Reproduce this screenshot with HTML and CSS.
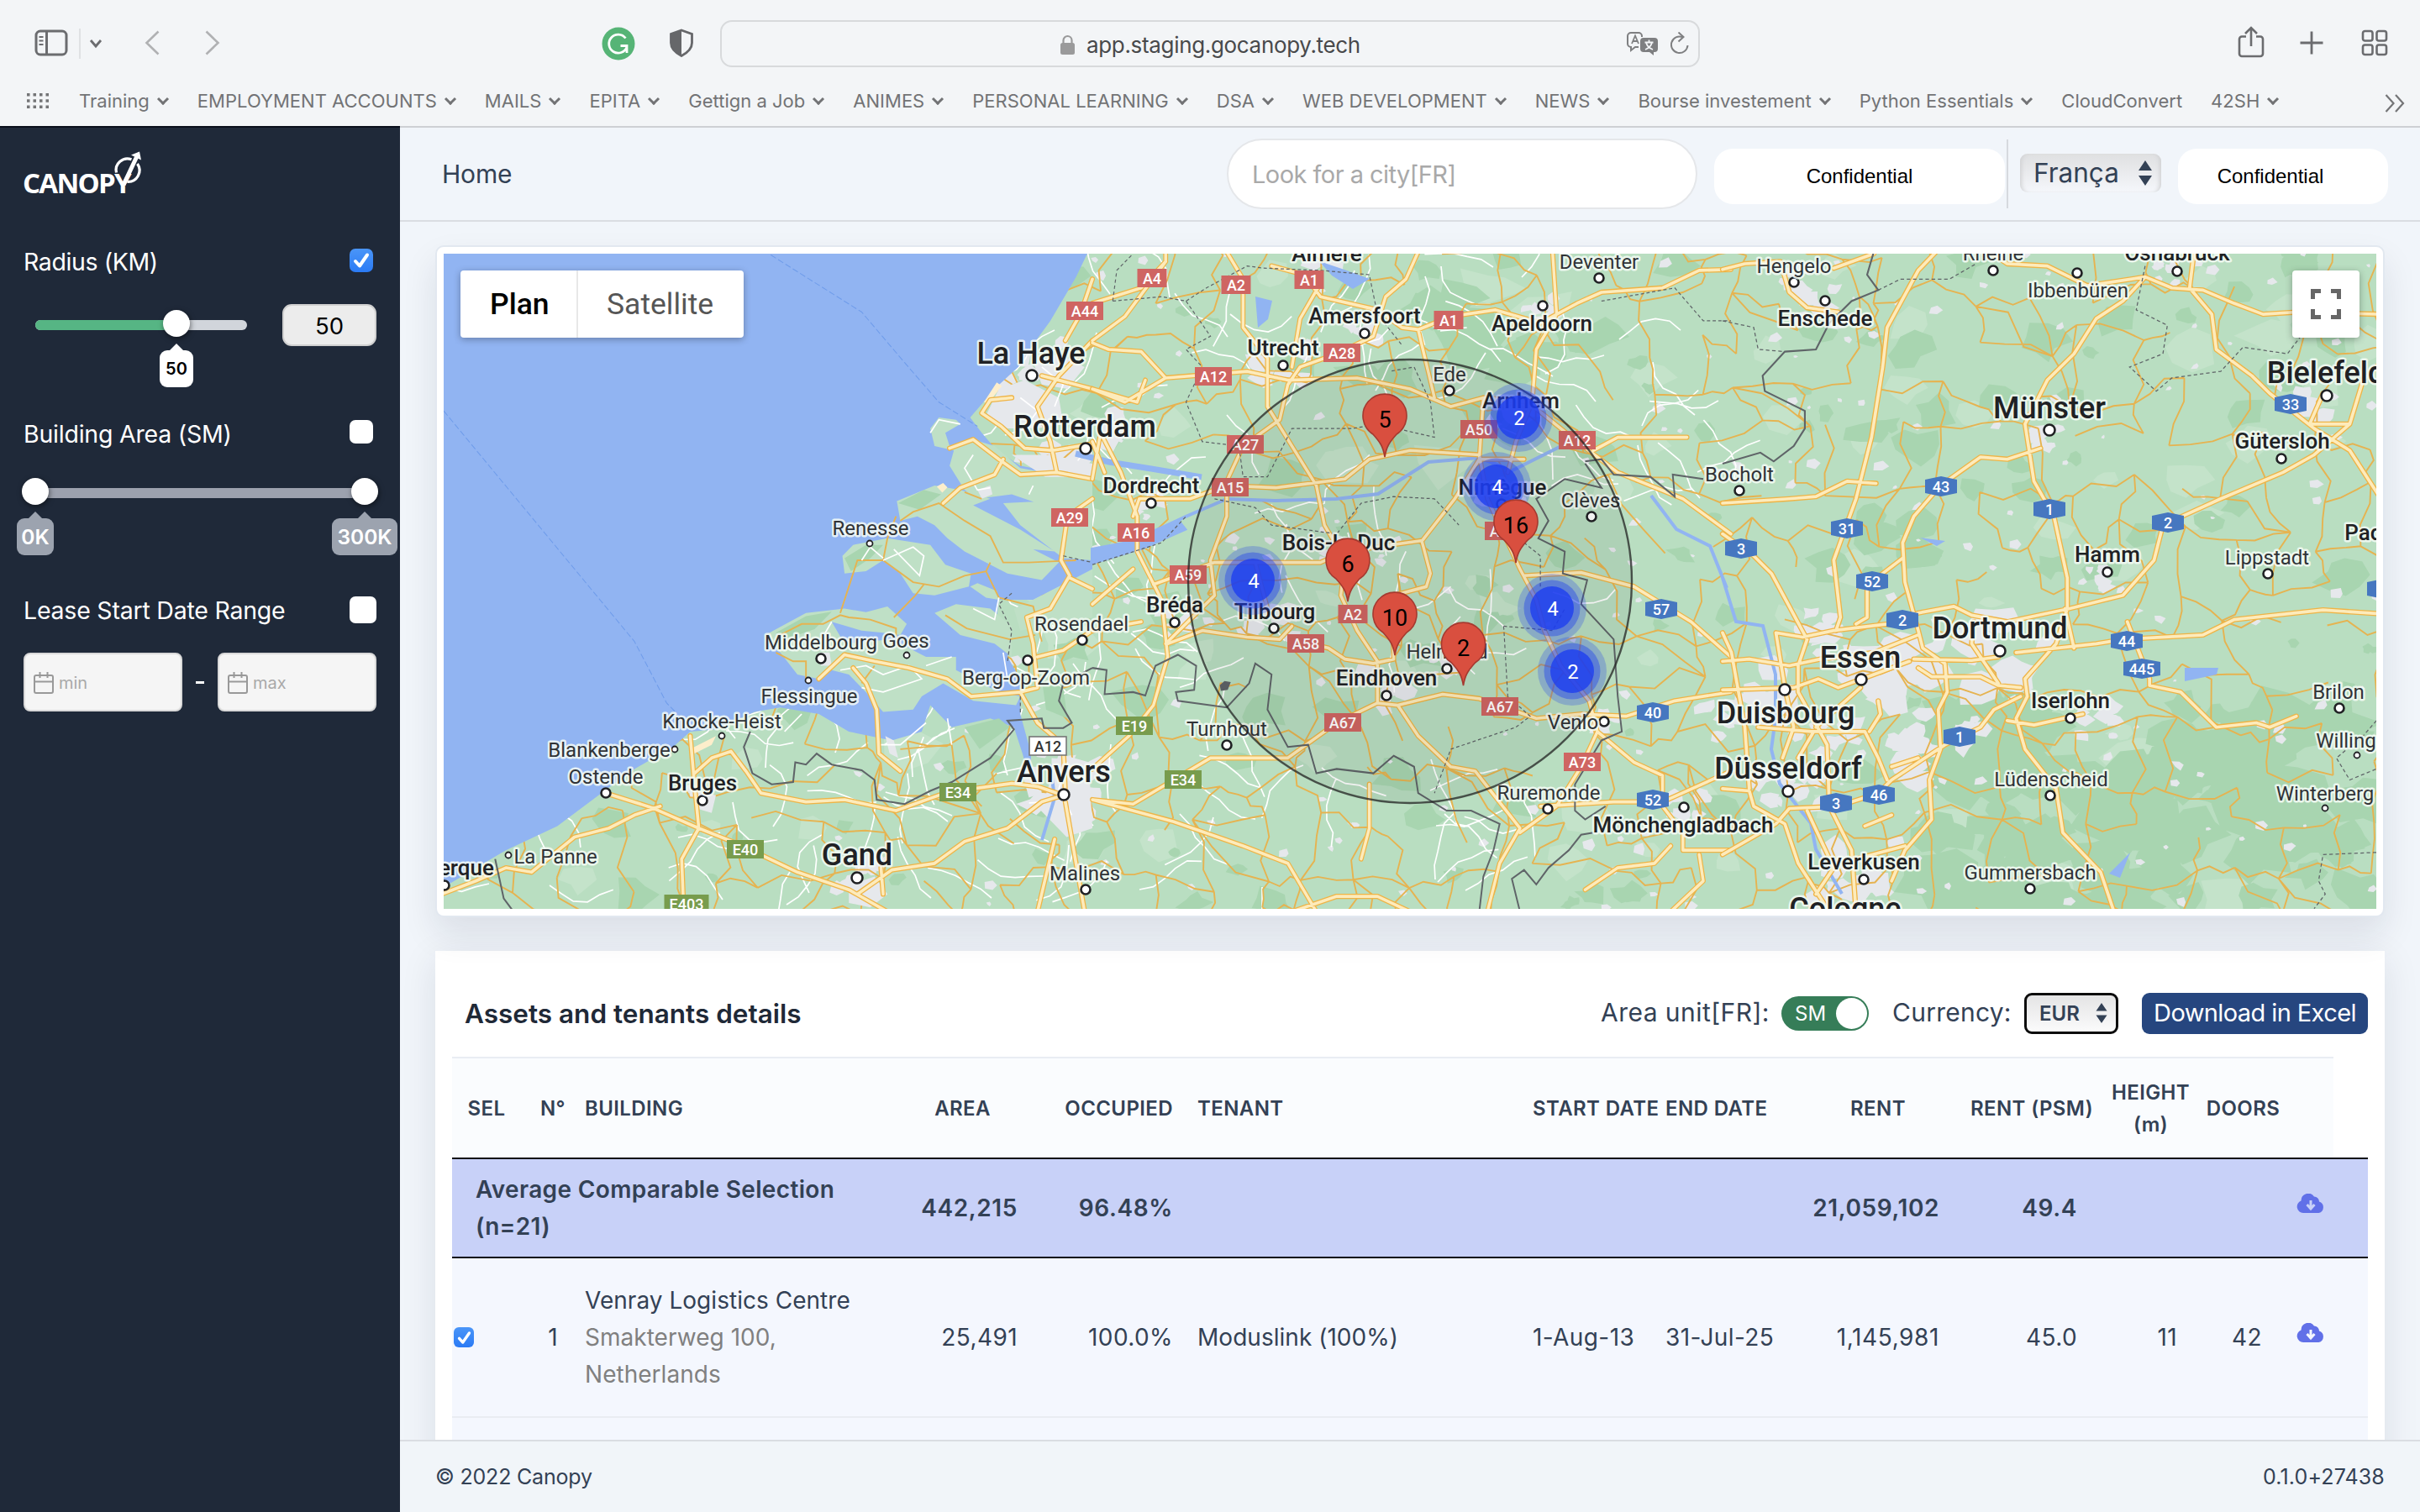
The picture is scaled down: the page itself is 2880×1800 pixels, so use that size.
FILE: index.html
```html
<!DOCTYPE html>
<html lang="en">
<head>
<meta charset="utf-8">
<title>Canopy</title>
<link rel="stylesheet" href="styles.css">
</head>
<body>
<div class="browser">
  <div class="toolbar">
    <svg class="ic-side" width="40" height="32" viewBox="0 0 40 32" fill="none" stroke="#6b6c6f" stroke-width="3"><rect x="2" y="2" width="36" height="28" rx="5"/><path d="M14.500 2V30"/><path stroke-width="2" d="M5.500 9h5M5.500 13.500h5M5.500 18h5"/></svg>
    <span class="tb-div"></span>
    <svg class="ic-drop" width="16" height="12" viewBox="0 0 16 12" fill="none" stroke="#6b6c6f" stroke-width="2.800"><path d="M2 2l6 7 6-7"/></svg>
    <svg class="ic-back" width="18" height="30" viewBox="0 0 18 30" fill="none" stroke="#b0b1b3" stroke-width="2.600"><path d="M16.500 1.500L2.500 15l14 13.500"/></svg>
    <svg class="ic-fwd" width="18" height="30" viewBox="0 0 18 30" fill="none" stroke="#b0b1b3" stroke-width="2.600"><path d="M1.500 1.500L15.500 15l-14 13.500"/></svg>
    <svg class="ic-g" width="40" height="40" viewBox="0 0 40 40" fill="none"><circle cx="20" cy="20" r="19.500" fill="#56b476"/><path d="M28.500 13.500A11 11 0 1 0 30 24v-1.500h-7.500M30 22.500V31" stroke="#fff" stroke-width="2.800"/></svg>
    <svg class="ic-shield" width="30" height="34" viewBox="0 0 30 34"><path d="M15 2L27.500 6.500V17c0 7-5 11.500-12.500 15.500C7.500 28.500 2.500 24 2.500 17V6.500z" fill="none" stroke="#66676a" stroke-width="2.800"/><path d="M15 2L2.500 6.500V17c0 7 5 11.500 12.500 15.500z" fill="#66676a"/></svg>
    <div class="url">
      <svg class="ic-lock" width="17" height="24" viewBox="0 0 17 24"><rect x="0" y="10" width="17" height="14" rx="2.500" fill="#9a9a9b"/><path d="M3.500 11V7a5 5 0 0 1 10 0v4" fill="none" stroke="#9a9a9b" stroke-width="2.200"/></svg>
      <span class="url-text">app.staging.gocanopy.tech</span>
      <svg class="ic-tr" width="38" height="28" viewBox="0 0 38 28"><path d="M18 6V5a4 4 0 0 0-4-4H5a4 4 0 0 0-4 4v9a4 4 0 0 0 4 4v4l5-4h4" fill="none" stroke="#7e7f81" stroke-width="2"/><path d="M6 14l4-9.500L14 14M7.500 11h5" fill="none" stroke="#7e7f81" stroke-width="1.800"/><path d="M20 7h13a4 4 0 0 1 4 4v9a4 4 0 0 1-4 4h-1v4l-5-4h-7a4 4 0 0 1-4-4v-9a4 4 0 0 1 4-4z" fill="#7e7f81"/><path d="M21.500 12.500h10M26.500 9.500v3M30 12.500c-1 4-4 7-8 8.500M23 12.500c1 4 4 7 8 8.500" stroke="#f3f5f7" stroke-width="1.800" fill="none"/></svg>
      <svg class="ic-re" width="22" height="27" viewBox="0 0 22 27" fill="none" stroke="#7e7f81" stroke-width="2"><path d="M20.500 16A9.800 9.800 0 1 1 14.500 6.200"/><path d="M9.500 .5L15.500 6l-6 5.500"/></svg>
    </div>
    <svg class="ic-share" width="32" height="38" viewBox="0 0 32 38" fill="none" stroke="#6b6c6f" stroke-width="2.600"><path d="M10 12.500H5a3 3 0 0 0-3 3V33a3 3 0 0 0 3 3h22a3 3 0 0 0 3-3V15.500a3 3 0 0 0-3-3h-5"/><path d="M16 24V3M9 9l7-7 7 7"/></svg>
    <svg class="ic-plus" width="28" height="28" viewBox="0 0 28 28" stroke="#6b6c6f" stroke-width="2.800"><path d="M14 0.500v27M0.500 14h27"/></svg>
    <svg class="ic-grid" width="32" height="32" viewBox="0 0 32 32" fill="none" stroke="#6b6c6f" stroke-width="2.600"><rect x="2" y="2" width="11.500" height="11.500" rx="2.500"/><rect x="18.500" y="2" width="11.500" height="11.500" rx="2.500"/><rect x="2" y="18.500" width="11.500" height="11.500" rx="2.500"/><rect x="18.500" y="18.500" width="11.500" height="11.500" rx="2.500"/></svg>
  </div>
  <div class="bookmarks">
    <svg class="ic-dots" width="26" height="18" viewBox="0 0 26 18" fill="#747577"><path d="M0 0h3.500v3.500H0zM7.500 0H11v3.500H7.500zM15 0h3.500v3.500H15zM22.500 0H26v3.500h-3.500zM0 7.200h3.500v3.500H0zM7.500 7.200H11v3.500H7.500zM15 7.200h3.500v3.500H15zM22.500 7.200H26v3.500h-3.500zM0 14.400h3.500v3.500H0zM7.500 14.400H11v3.500H7.500zM15 14.400h3.500v3.500H15zM22.500 14.400H26v3.500h-3.500z"/></svg>
    <span class="bm dd">Training</span><span class="bm dd">EMPLOYMENT ACCOUNTS</span><span class="bm dd">MAILS</span><span class="bm dd">EPITA</span><span class="bm dd">Gettign a Job</span><span class="bm dd">ANIMES</span><span class="bm dd">PERSONAL LEARNING</span><span class="bm dd">DSA</span><span class="bm dd">WEB DEVELOPMENT</span><span class="bm dd">NEWS</span><span class="bm dd">Bourse investement</span><span class="bm dd">Python Essentials</span><span class="bm">CloudConvert</span><span class="bm dd">42SH</span>
    <svg class="ic-more" width="24" height="22" viewBox="0 0 24 22" fill="none" stroke="#747577" stroke-width="2.200"><path d="M1.500 1l9 10-9 10M13 1l9 10-9 10"/></svg>
  </div>
</div>
<div class="app">
  <aside class="sidebar">
    <div class="logo"><span class="logo-text">CANOPY</span>
      <svg class="logo-leaf" width="38" height="52" viewBox="0 0 38 52" fill="none" stroke="#fff"><path d="M4.500 25.500A13.500 13.500 0 0 1 22.500 9.800" stroke-width="3.200"/><path d="M29.500 15A13.500 13.500 0 0 1 17.500 36.300" stroke-width="3.200"/><path d="M13 40L29 6" stroke-width="5"/><path d="M22 4.500L32 0.500 34 10.500z" fill="#fff" stroke="none"/></svg>
    </div>
    <div class="f-head radius-head"><span class="f-label">Radius (KM)</span><span class="cb on"><svg width="20" height="20" viewBox="0 0 20 20" fill="none" stroke="#fff" stroke-width="4" stroke-linecap="round" stroke-linejoin="round"><path d="M3 11l5 5.500L17 3.500"/></svg></span></div>
    <div class="radius-row">
      <div class="track track-a"><span class="fill"></span><span class="thumb ta"></span><span class="tip tip-w">50</span></div>
      <div class="num">50</div>
    </div>
    <div class="f-head area-head"><span class="f-label">Building Area (SM)</span><span class="cb"></span></div>
    <div class="track track-b"><span class="thumb tl"></span><span class="thumb tr"></span><span class="tip tip-l">0K</span><span class="tip tip-r">300K</span></div>
    <div class="f-head lease-head"><span class="f-label">Lease Start Date Range</span><span class="cb cb-lg"></span></div>
    <div class="dates">
      <div class="date"><svg width="24" height="26" viewBox="0 0 24 26" fill="none" stroke="#999" stroke-width="2"><rect x="1" y="4" width="22" height="21" rx="2"/><path d="M1 11.500h22M7.500 0v7M16.500 0v7"/></svg>min</div>
      <span class="dash"></span>
      <div class="date"><svg width="24" height="26" viewBox="0 0 24 26" fill="none" stroke="#999" stroke-width="2"><rect x="1" y="4" width="22" height="21" rx="2"/><path d="M1 11.500h22M7.500 0v7M16.500 0v7"/></svg>max</div>
    </div>
  </aside>
  <div class="main">
    <header class="header">
      <span class="home">Home</span>
      <div class="search"><span>Look for a city[FR]</span></div>
      <div class="conf conf-a">Confidential</div>
      <span class="hdiv"></span>
      <div class="country"><span>França</span><svg width="16" height="30" viewBox="0 0 16 30" fill="#334155"><path d="M8 0l8 12H0zM8 30L0 18h16z"/></svg></div>
      <div class="conf conf-b">Confidential</div>
    </header>
    <div class="content">
      <section class="map-card">
        <svg class="map" width="2300" height="780" viewBox="528 302 2300 780">
          <rect x="528" y="302" width="2300" height="780" fill="#b9dec1"/>
          <g id="terrain"></g>
          <g transform="translate(500 280) scale(.5102 .52296)">
            <path class="sea" d="M50 38H1558L1530 95 1470 195 1440 235 1395 300 1345 345 1283 415 1310 450 1345 490 1400 525 1568 555V800L1500 795 1430 830 1350 830 1345 870 1380 920 1370 960 1400 1010 1400 1090 1425 1180 1425 1250 1405 1180 1385 1120 1330 1100 1240 1120 1190 1070 1170 1130 1100 1150 1000 1130 930 1090 840 1075 780 1085 690 1125 630 1130 590 1165 500 1215 430 1265 320 1345 200 1400 50 1487Z"/>
            <path class="isle" d="M1190 440L1210 415 1250 420 1260 430 1225 450 1235 480 1290 465 1340 480 1400 530 1568 560V600L1440 610 1380 590 1300 600 1270 580 1235 525 1245 490 1200 480ZM1112 605L1200 570 1260 580 1330 600 1290 615 1400 670 1480 720 1430 715 1490 745 1450 785 1370 770 1270 720 1230 690 1200 660 1160 640 1120 650ZM1360 610L1568 600V740L1500 735 1400 660ZM985 730L1010 705 1090 690 1190 705 1225 750 1285 770 1280 800 1200 820 1150 815 1120 770 1080 740 1040 765 990 770ZM1283 800L1300 792 1345 810 1350 830 1320 825ZM1200 860L1250 840 1330 850 1380 890 1380 960 1340 930 1260 910ZM1430 830L1500 795 1568 760V870L1400 900 1385 850ZM805 910L900 860 990 850 1040 858 1090 845 1135 885 1120 910 1080 905 1030 900 960 880 990 930 1100 920 1180 960 1250 960 1250 990 1350 1040 1400 1050 1390 1070 1290 1060 1220 1020 1170 1050 1150 1080 1080 1085 1040 1040 1000 1000 960 990 930 1010 880 1000 840 950Z"/>
            <path class="forest" d="M990 735l50-30 40 0-30 30-45 30zM830 905l70-38 60-10-40 40-60 20zM1115 610l60-30 40 10-50 35zM1270 1120l80-20 25 20-70 50zM1450 1010l50 20 10 70-50-20z"/>
            <path class="sand" d="M1205 572l15-8 10 10-12 12zM1345 335l-30 45 10 3 32-40zM640 1180l-10-10 60-30-10 20z"/>
            <path class="ur" d="M1350 350l60-20 80 40 10 60-60 10-70 0-50-30zM1430 290l60-20 60 30-40 50-60-10zM1380 500l90 0 98 20v30l-110 0zM1300 580l30-10 5 20-25 10zM930 950l25 0 5 30-25 0zM640 1265l50 10-10 40-35-10zM1490 1180l70 20 8 150-60 20-60-60zM1000 1480l60-20 30 40-40 30-50-10zM1400 1210l40 0 10 60-30 10zM1085 1140l20 10 10 40-20-10z"/>
            <path class="road" d="M1120 650l30-20 60-20 60 40 60 35 30 60 60 0 110-5M980 860l20-60 20-60 60 0 10-50 20-50M1080 740l70 50 60 10 60-25 50-10 10-20M1105 870l50-50 20-25M830 915l60-30 50 0 40-20 20 5 50 5 60 20 0 20M830 950l40 20 30 0 0 40M1225 865l50 30 100 25 60-10M1060 980l-30 40M1420 960l0 80M1120 1170l120-10 10 80 60 60M1310 600l-40-15M1320 765l30 60 80 20 20 80M1345 1225l-60 60 40 60 60 40"/>
            <path class="minor" d="M1190 450l20-30 50 10M1290 500l-20 30 30 50 30-5M1030 740l20-30 30 25M1080 740l70-30 25 20-10 45-60-60M960 880l-30 50M980 990l60-10 40 20 60-20 30 30-90 30-50-10M1290 850l50 25 10-50M1180 980l60-20M1180 1110l-60 50-50 0M1230 1100l10 60M1430 570l-10 20M850 1130l40-40M1360 950l10 60M1400 370l40 30-30 40M1450 300l50 40-20 50M1510 1200l-20 60 30 60"/>
            <path class="ferry" d="M55 400L500 925 575 1065 595 1085M818 45L1030 175 1130 290 1210 380 1300 435"/>
          </g>
          <g class="water-lines">
            <path d="M1300 662L1358 640 1411 615 1460 594 1518 596 1590 594 1640 588 1700 550 1760 545 1800 560 1860 530"/>
            <path d="M1280 540l40 10 50 8 60 10" stroke-width="7"/>
            <path d="M1300 670l60-18 50-22-8-10-60 26-42 8z" fill="#91b4f2"/>
            <path d="M2050 688l16 52 32 5 15 58 0 52-5 37 10 41 37 47 6 31 31 53M1965 590l30 40 40 20 20 50M1240 1000l15-50-5-40"/>
            <path d="M1570 311l30 10 30 11-20 12-25-16zM1494 353l20 5-5 22-12 10zM2600 795l40 0-2 8-38 8zM2510 1040l25-25-12 30zM2285 640l30 4-10 6z" fill="#91b4f2" stroke="none"/>
          </g>
          <g class="cased" id="highways">
            <g transform="translate(500 280) scale(.5102 .52296)"><path id="h5" d="M50 1500L130 1470 200 1440 260 1450 360 1370 440 1350 500 1320 560 1300M433 1270L540 1303 650 1350 740 1385 880 1450 1000 1490 1090 1540M630 1140L640 1250 650 1350 610 1420 615 1540M640 1225L680 1190 725 1175 760 1220 795 1270 900 1290 990 1285 1110 1310 1230 1268 1380 1248 1440 1255 1500 1275M930 1010L990 955 1060 970 1140 985 1230 1010 1285 1050 1400 1040 1440 1030 1430 930 1415 870 1470 850 1515 775 1495 740 1510 640 1568 600M1010 985L1040 1020 1065 1080 1070 1180 1120 1220M1400 1040L1440 1110 1500 1160 1505 1270M1020 1500L1100 1445 1200 1430 1270 1380 1370 1350 1450 1290 1500 1275M1075 1440L1080 1500M1480 1375L1440 1540M1505 1290L1530 1430 1550 1540M1235 485L1290 465 1350 510 1400 545 1485 540 1568 555M1220 610L1260 575 1340 545 1360 510M1310 405L1355 435 1410 485 1475 490 1568 475M1485 540L1470 470 1440 390 1490 320 1568 240M1450 320L1568 350M1440 960L1500 945 1568 900M1515 780L1568 805M1310 405L1330 375 1380 370M1505 240L1540 180 1568 100"/></g>
            <g transform="translate(1300 280) scale(.48469 .52296)"><path id="h6" d="M0 350L80 380 180 325 380 310 480 330 650 325 780 350 880 390 960 370 1070 380 1190 470 1290 540 1450 600 1568 680M0 240L80 185 180 60 180 38M0 155L120 120 180 60M0 245L40 260 120 265 180 325M330 38L370 100 370 210 430 280 430 390 550 570 570 660 620 740 610 820 650 900 700 970 700 1065M440 70L520 90 560 140 700 170 760 210 800 215 880 185 990 170 1100 200 1190 155 1250 130 1400 120 1490 80 1568 78M800 38L770 100 720 140 690 230 600 270 510 300 480 340 460 420 370 480 330 560 330 640 290 740 300 820 180 930M560 110L510 190 490 300M100 640L115 600 240 600 330 570 450 575 620 555 680 510 780 490 950 500M0 555L20 450 70 540 110 640 110 720 170 830 185 960 150 1070 90 1140 0 1215M0 840L100 760M0 900L120 880M0 470L30 540M185 930L270 900 380 915 460 920 490 890M150 795L300 745 560 745 620 720 810 695 890 600 950 510 960 370M810 700L830 770 820 800 740 820M490 920L580 940 620 965 690 975 740 965 735 820M700 1065L750 1070 860 1045 950 1055 1090 1100 1200 1090 1310 1095 1430 1060 1568 1040M700 1065L600 1110 480 1190 290 1190 100 1295 0 1285 200 1335 370 1390 480 1430 550 1540M750 1070L800 1140 880 1210 940 1220 1050 1350 1000 1430 970 1540M950 500L970 600 1050 760 1090 830 1110 900 1150 980 1220 1060 1240 1130 1200 1210 1140 1300 1050 1360M1060 775L1200 768 1330 800 1470 880 1568 960M1240 1130L1330 1200 1400 1230 1400 1300 1450 1360 1450 1400 1568 1400M1100 1300L1280 1290 1400 1290 1568 1220M1130 38L1140 180 1090 260 1080 380 1040 470 1020 540M800 215L840 370M490 1540L600 1505 700 1505 780 1540M680 1250L680 1350 660 1420M1230 490L1290 460 1460 460M1210 1490L1290 1440 1380 1430 1420 1390M400 745L430 850M0 350L110 380 130 330M950 510L1060 510M1490 1410L1500 1470 1420 1540"/></g>
            <g transform="translate(2050 280) scale(.52934 .52296)"><path id="h7" d="M0 680L70 730 110 770 190 920 170 980 170 1040 235 1160 240 1300 290 1400 300 1540M480 38L440 80 370 210 360 300 335 460 300 600 250 740 265 870 255 900M0 78L50 65 130 60 150 130 190 165 260 175M250 75L340 42M950 95L900 150 840 190 790 270 730 330 680 430 700 560 745 640 775 780 775 850 750 930 680 1010 685 1050 660 1100 680 1170 750 1260 765 1360 850 1450 880 1540M600 38L640 65 730 70 820 115 950 95 1010 120 1080 125 1150 155 1215 180 1290 175 1480 180M1060 38L1050 120 1100 180 1110 260 1190 320 1230 360 1330 440 1410 490 1480 600M0 610L150 600 210 595 280 560 345 565M715 485L640 510 580 505 490 570 430 640 405 700 410 790 440 900 450 940 500 975 505 1040 485 1080 490 1170 465 1240 470 1330 410 1400 380 1470M120 905L180 915 250 900 370 885 440 860 520 845 560 865 640 880 780 850 900 820 970 740 990 660 1120 600 1260 540 1330 500 1410 430 1440 330 1480 290M0 970L60 965 150 980 220 965 340 950 440 910M430 965L560 968 620 960M0 1035L160 1030 215 1010 260 1030 340 1000 420 970M440 985L470 1005 580 1005 620 1025 670 1030M660 950L750 940 840 930 900 920 1080 910 1150 875 1350 853 1480 862M910 880L960 1010 960 1025 1030 1040 1110 1120 1200 1110 1230 1120 1290 1095M670 1050L610 1080 580 1120 500 1160 380 1240 350 1270 260 1300 150 1305 120 1340 0 1410M640 1105L700 1115 810 1090M0 1260L60 1265 70 1300 140 1340 170 1430 240 1540M0 905L20 950 50 1120 60 1260M80 1120L200 1130 320 1130 350 1190 370 1240M205 1130L170 1190M325 800L325 870 300 885M405 735L360 770 340 785M310 1030L210 1120M350 1060L355 1090 330 1130M565 880L560 930 620 1020M120 905L140 1030 160 1120 135 1190M190 1310L250 1440 210 1500M770 850L790 940M1410 430L1320 430 1350 360M300 1420L410 1390M380 1210L440 1190M320 1345L380 1320"/></g>
          </g>
          <g class="border">
            <path transform="translate(500 280) scale(.5102 .52296)" d="M770 1130L755 1165 775 1225 820 1250 870 1245 875 1200 900 1205 925 1180 960 1205 1030 1218 1060 1240 1065 1285 1130 1295 1190 1265 1240 1245 1330 1190 1385 1125 1370 1105 1450 1100 1455 1122 1500 1122 1520 1110 1490 1060 1500 1020 1568 985M175 1420L195 1510 218 1540"/>
            <path transform="translate(1300 280) scale(.48469 .52296)" d="M0 985L35 990 30 1045 100 1040 130 1048 155 980 210 955 255 980 250 1035 205 1040 210 1060 330 1075 385 1020 400 975 440 1000 430 1080 480 1165 530 1160 550 1225 600 1215 690 1225 740 1185 790 1210 800 1270 870 1310 930 1310 1000 1340 985 1400 960 1460 950 1540M1210 515L1250 510 1280 545 1370 550 1430 595 1425 545 1500 555M1210 520L1250 575 1160 555 1090 600 1120 650 1095 690 1160 720 1155 770 1215 785 1200 840 1280 920 1290 1050 1300 1130 1250 1150 1185 1250 1185 1310 1210 1330 1260 1300M1230 1360L1200 1365 1170 1400 1120 1440 1090 1478 1060 1445 1030 1465 1050 1540"/>
            <path transform="translate(1300 280) scale(.48469 .52296)" fill="#5f6468" d="M315 1025l10-8 12 2-6 14-14 2z"/>
            <path transform="translate(2050 280) scale(.52934 .52296)" d="M340 38L325 90 350 125 290 150 240 200 210 260 140 265 90 320 95 355 185 400 185 440 160 480 115 515 85 495 0 520"/>
            <g class="dash-line">
              <path transform="translate(1300 280) scale(.48469 .52296)" d="M50 150L60 80 100 42M50 150L170 140 230 150 280 120 380 70 420 75 560 80 680 90 700 180 760 250M230 150L290 230 230 260 270 300 230 380 270 470 360 480 370 550 430 550 490 440 640 440 700 430 840 460 830 380 790 300 730 310M300 600L400 620 440 660 600 680 660 610 740 595 840 600 900 660M1010 890L1130 900 1160 850M1010 890L1020 1050 1075 1095 1040 1120 880 1170 840 1270M1060 700L1100 730 1100 800M1250 150L1430 120 1500 195 1568 195M0 750L170 700 230 640"/>
              <path transform="translate(2050 280) scale(.52934 .52296)" d="M350 125L400 100 510 100 570 65M950 70L930 170 1000 205 990 270 915 300 975 355 1010 325 1120 310 1170 255 1270 270 1300 230M1470 1105L1440 1140 1380 1190 1410 1240 1470 1215M1470 1405L1350 1410 1340 1470 1355 1500 1330 1533M0 195L70 210 80 260 140 265"/>
              <path transform="translate(500 280) scale(.5102 .52296)" d="M1500 730L1568 745M1380 815L1350 840 1380 900 1370 970M1400 1050L1400 1090"/>
            </g>
          </g>
          <g id="shields"></g>
          <g id="labels"></g>
          <circle cx="1678" cy="692" r="264" fill="#000" fill-opacity=".055" stroke="#222" stroke-opacity=".75" stroke-width="2.400"/>
          <g id="markers"></g>
        </svg>
        <div class="maptype"><span class="mt-on">Plan</span><span class="mt-off">Satellite</span></div>
        <div class="fs"><svg width="36" height="36" viewBox="0 0 36 36" fill="none" stroke="#666" stroke-width="5"><path d="M2.500 12V2.500H12M24 2.500h9.500V12M33.500 24v9.500H24M12 33.500H2.500V24"/></svg></div>
      </section>
      <section class="table-card">
        <div class="t-head">
          <h2>Assets and tenants details</h2>
          <span class="t-lab">Area unit[FR]:</span>
          <span class="toggle"><span>SM</span><i></i></span>
          <span class="t-lab t-cur">Currency:</span>
          <div class="eur"><span>EUR</span><svg width="14" height="24" viewBox="0 0 14 24" fill="#334155"><path d="M7 0l6.500 9.500H.500zM7 24L.500 14.500h13z"/></svg></div>
          <div class="dl">Download in Excel</div>
        </div>
        <div class="row thead">
          <span class="c c-sel">SEL</span><span class="c c-no">N°</span><span class="l16">BUILDING</span><span class="c">AREA</span><span class="r">OCCUPIED</span><span class="l30">TENANT</span><span>START DATE</span><span>END DATE</span><span class="c c-rent">RENT</span><span class="c c-psm">RENT (PSM)</span><span class="c">HEIGHT<br>(m)</span><span class="c">DOORS</span>
        </div>
        <div class="row avg">
          <span class="avg-name">Average Comparable Selection<br>(n=21)</span><span class="r">442,215</span><span class="r">96.48%</span><span></span><span></span><span></span><span class="r">21,059,102</span><span class="r p28">49.4</span><span></span><span></span>
          <span class="cloud"><svg width="34" height="24" viewBox="0 0 34 24"><path d="M8 23a7.500 7.500 0 0 1-2.500-14.500A8.500 8.500 0 0 1 21 3.500a6 6 0 0 1 6 6A7 7 0 0 1 26.500 23z" fill="#6170e8"/><path d="M17 8v8M12.500 13l4.500 5 4.500-5" fill="none" stroke="#c8d1f8" stroke-width="3"/></svg></span>
        </div>
        <div class="row asset">
          <span><span class="cb cb-sm on"><svg width="17" height="17" viewBox="0 0 20 20" fill="none" stroke="#fff" stroke-width="4" stroke-linecap="round" stroke-linejoin="round"><path d="M3 11l5 5.500L17 3.500"/></svg></span></span><span class="r p16">1</span><span class="l16 bld"><span class="nm">Venray Logistics Centre</span><br><span class="addr">Smakterweg 100,<br>Netherlands</span></span><span class="r">25,491</span><span class="r">100.0%</span><span class="l30 bld">Moduslink (100%)</span><span>1-Aug-13</span><span>31-Jul-25</span><span class="r wide">1,145,981</span><span class="r p28">45.0</span><span class="r p28">11</span><span class="r p28">42</span>
          <span class="cloud"><svg width="34" height="24" viewBox="0 0 34 24"><path d="M8 23a7.500 7.500 0 0 1-2.500-14.500A8.500 8.500 0 0 1 21 3.500a6 6 0 0 1 6 6A7 7 0 0 1 26.500 23z" fill="#6170e8"/><path d="M17 8v8M12.500 13l4.500 5 4.500-5" fill="none" stroke="#f4f7fe" stroke-width="3"/></svg></span>
        </div>
        <div class="row next"></div>
      </section>
    </div>
    <footer class="footer"><span class="copy">© 2022 Canopy</span><span class="ver">0.1.0+27438</span></footer>
  </div>
</div>
<script src="map.js"></script>
</body>
</html>
```
FILE: styles.css
```css
*, *::before, *::after { box-sizing: border-box; }
body { margin: 0; width: 2880px; height: 1800px; overflow: hidden; font-family: Inter, "Liberation Sans", sans-serif; color: #334155; background: #f1f5fa; }
svg { display: block; flex: none; }

/* browser chrome */
.browser { height: 150px; background: #f3f5f7; }
.toolbar { display: flex; height: 102px; padding-left: 41px; align-items: flex-start; }
.ic-side { margin-top: 35px; }
.tb-div { width: 2px; height: 36px; margin: 34px 0 0 13px; background: #dfe1e3; }
.ic-drop { margin: 46px 0 0 10px; }
.ic-back { margin: 36px 0 0 50px; }
.ic-fwd { margin: 36px 0 0 54px; }
.ic-g { margin: 32px 0 0 454px; }
.ic-shield { margin: 34px 0 0 40px; }
.url { display: flex; align-items: center; width: 1166px; height: 56px; margin: 24px 0 0 31px; padding-left: 403px; border: 2px solid #d8dadc; border-radius: 14px; }
.url-text { margin-left: 14px; width: 642px; font-size: 26px; color: #48494b; letter-spacing: -.33px; white-space: nowrap; padding-top: 2px; }
.ic-lock { margin-top: 1px; }
.ic-tr { margin-left: 1px; margin-top: -1px; }
.ic-re { margin-left: 14px; margin-top: -1px; }
.ic-share { margin: 31px 0 0 640px; }
.ic-plus { margin: 37px 0 0 42px; }
.ic-grid { margin: 35px 0 0 45px; }
.bookmarks { display: flex; height: 36px; padding-left: 32px; align-items: center; white-space: nowrap; }
.ic-dots { margin-right: 2px; }
.bm { display: flex; align-items: center; margin-left: 34px; font-size: 22px; letter-spacing: .015px; color: #727375; }
.dd::after { content: ""; width: 10px; height: 10px; margin: -5px 2px 0 11px; border: solid #727375; border-width: 0 3px 3px 0; transform: rotate(45deg); }
.ic-more { margin: 6px 0 0 auto; margin-right: 18px; }

/* application shell */
.app { display: flex; height: 1650px; }
.sidebar { width: 476px; border-top: 2px solid #0a0f1c; background: #1f2939; color: #fff; padding: 0 28px; }
.main { flex: 1; display: flex; flex-direction: column; border-top: 2px solid #cdd0d4; }

.logo { position: relative; height: 138px; padding-top: 46px; }
.logo-text { font: 700 33px/40px "Open Sans", sans-serif; letter-spacing: -1.700px; margin-left: -1px; }
.logo-leaf { position: absolute; left: 106px; top: 28px; }
.f-head { display: flex; justify-content: space-between; align-items: center; height: 44px; padding: 0 4px 0 0; font-size: 28.500px; }
.f-label { letter-spacing: -.22px; }
.radius-head .cb { margin-top: -4px; }
.radius-head .f-label { margin-top: -1px; letter-spacing: -.4px; }
.area-head .f-label { margin-top: 5px; }
.cb { display: flex; align-items: center; justify-content: center; width: 28px; height: 28px; border-radius: 7px; background: #fff; }
.cb.on { background: linear-gradient(#4a95f8, #2b7bf5); }
.cb-lg { width: 32px; height: 32px; }
.cb-sm { width: 24px; height: 24px; border-radius: 6px; margin-left: 2px; }
.radius-row { display: flex; align-items: center; justify-content: space-between; margin-top: 28px; padding-left: 14px; height: 50px; }
.track { position: relative; height: 12px; border-radius: 6px; }
.track-a { width: 252px; background: #d1d5db; }
.fill { display: block; width: 168px; height: 12px; border-radius: 6px; background: #56b584; }
.thumb { position: absolute; top: -12px; width: 32px; height: 32px; border-radius: 50%; background: #fff; box-shadow: 1px 2px 6px rgba(0,0,0,.5); }
.ta { left: 152px; }
.tl { left: -16px; }
.tr { right: -16px; }
.tip { position: absolute; top: 36px; height: 44px; border-radius: 9px; display: flex; align-items: center; justify-content: center; font-weight: 600; background: #9ca3af; color: #fff; font-size: 24.500px; }
.tip::before { content: ""; position: absolute; top: -8px; left: 50%; margin-left: -8px; border: 8px solid transparent; border-top: 0; border-bottom-color: #9ca3af; }
.tip-w { left: 148px; width: 40px; background: #fff; color: #000; font-size: 20px; }
.tip-w::before { border-bottom-color: #fff; }
.tip-l { left: -22px; width: 44px; }
.tip-r { right: -39px; width: 78px; }
.num { width: 112px; height: 50px; border: 2px solid #d0d0d0; border-radius: 11px; background: #ececec; color: #000; font-size: 27.500px; display: flex; align-items: center; justify-content: center; padding-top: 2px; }
.area-head { margin-top: 80px; }
.track-b { margin: 45px 14px 0; background: #9ca1ae; }
.lease-head { margin-top: 111px; padding-right: 0; }
.dates { display: flex; align-items: center; justify-content: space-between; margin-top: 29px; }
.date { display: flex; align-items: center; gap: 6px; width: 189px; height: 70px; padding: 2px 0 0 10px; border: 2px solid #d9d9d9; border-radius: 8px; background: #f5f5f5; color: #a9a9a9; font-size: 20px; }
.dash { width: 10px; height: 3px; background: #fff; }

/* header */
.header { display: flex; align-items: center; height: 112px; border-bottom: 2px solid #dadde2; padding-left: 50px; font-size: 30px; }
.home { width: 934px; letter-spacing: -.2px; }
.search { display: flex; align-items: center; width: 560px; height: 84px; padding-left: 28px; border: 2px solid #e5e7ea; border-radius: 42px; background: #fff; color: #a9a9a9; font-size: 29px; letter-spacing: -.55px; }
.conf { display: flex; align-items: center; justify-content: center; height: 66px; border-radius: 22px; background: #fff; color: #000; font: 24px "Liberation Sans", sans-serif; margin-top: 6px; }
.conf-a { width: 346px; margin-left: 20px; }
.hdiv { width: 2px; height: 82px; margin-left: 2px; background: #d6d9de; }
.country { display: flex; align-items: center; justify-content: space-between; width: 168px; height: 46px; margin: -3px 0 0 14px; padding: 0 11px 0 16px; border-radius: 9px; background: linear-gradient(#dfe0e1, #f5f7fb); box-shadow: inset 5px 0 5px -3px #d0d1d3, inset -5px 0 5px -3px #d0d1d3; font-size: 31.500px; }
.conf-b { width: 250px; margin-left: 20px; padding-right: 30px; }

/* cards */
.content { flex: 1; padding: 28px 42px 0; height: 1450px; overflow: hidden; }
.map-card { position: relative; width: 2320px; height: 800px; padding: 8px; border: 2px solid #e2e8f0; border-radius: 10px; background: #fff; box-shadow: 0 20px 40px rgba(20,30,60,.1); }
.map { font-family: Roboto, sans-serif; }
.maptype { position: absolute; left: 28px; top: 28px; display: flex; height: 80px; font: 35.500px/80px Roboto, sans-serif; background: #fff; border-radius: 4px; box-shadow: 0 2px 8px rgba(0,0,0,.3); }
.mt-on { width: 140px; padding-left: 35px; font-weight: 500; color: #000; border-right: 2px solid #e8e8e8; }
.mt-off { width: 197px; padding-left: 34px; color: #565656; }
.fs { position: absolute; right: 28px; top: 28px; width: 80px; height: 80px; display: flex; align-items: center; justify-content: center; background: #fff; border-radius: 4px; box-shadow: 0 2px 8px rgba(0,0,0,.3); }
.table-card { width: 2320px; height: 620px; margin-top: 40px; padding: 0 20px; background: #fff; box-shadow: 0 10px 40px rgba(20,30,60,.1); }
.t-head { display: flex; align-items: center; height: 126px; padding: 22px 0 0 15px; font-size: 30px; white-space: nowrap; }
h2 { margin: 0; width: 1352px; font-size: 31.500px; font-weight: 600; color: #1f2937; }
.t-lab { width: 215px; margin-top: -2px; letter-spacing: .45px; }
.toggle { display: flex; align-items: center; justify-content: space-between; width: 104px; height: 41px; padding: 0 2px 0 16px; border-radius: 21px; background: #367d58; color: #fff; font-size: 24px; }
.toggle i { width: 37px; height: 37px; border-radius: 50%; background: #fff; }
.t-cur { margin-left: 28px; width: 157px; letter-spacing: .25px; }
.eur { display: flex; align-items: center; justify-content: space-between; width: 112px; height: 49px; padding: 0 10px 0 15px; border: 3px solid #0c0c0c; border-radius: 9px; background: linear-gradient(#e4e4e5, #fbfbfb); font-size: 24px; font-weight: 600; }
.dl { width: 269px; height: 49px; margin-left: 28px; border-radius: 9px; background: #26467f; color: #fff; font-size: 29px; letter-spacing: -.6px; line-height: 47px; text-align: center; }
.row { display: grid; grid-template-columns: 90px 52px 400px 131px 185px 428px 158px 158px 168px 192px 119px 101px 98px; align-items: center; white-space: nowrap; font-size: 28px; letter-spacing: .4px; }
.r { text-align: right; }
.c { text-align: center; }
.l16 { padding-left: 16px; }
.l30 { padding-left: 29px; }
.p16 { padding-right: 16px; }
.p28 { padding-right: 28px; }
.bld { letter-spacing: .03px; }
.wide { letter-spacing: .6px; }
.thead { width: 2239px; height: 120px; padding-top: 2px; border-top: 2px solid #e9edf3; background: #fafcfe; font-size: 24px; font-weight: 600; line-height: 38px; }
.c-sel { padding-right: 8px; }
.c-no { padding-left: 8px; }
.c-rent { padding-left: 22px; }
.c-psm { padding-left: 28px; }
.avg { height: 120px; border: solid #0a0a14; border-width: 2px 0; background: #c8d1f8; font-weight: 600; line-height: 44px; }
.avg .r { letter-spacing: .6px; }
.avg-name { grid-column: span 3; padding-left: 28px; letter-spacing: .35px; }
.cloud { padding-left: 13px; margin-top: -11px; }
.asset { height: 190px; background: #f4f7fe; border-bottom: 2px solid #e9ecf2; line-height: 44px; }
.addr { color: #808080; }
.next { height: 60px; background: #f4f7fe; }
.footer { display: flex; justify-content: space-between; align-items: center; height: 86px; padding: 0 42px 1px; border-top: 2px solid #dadde2; background: #f1f5f9; font-size: 25px; }
.copy { letter-spacing: -.2px; }
.ver { letter-spacing: .15px; }

/* map layers */
.sea { fill: #91b4f2; }
.isle { fill: #bfe0c6; }
.forest { fill: #a8d5b0; }
.light { fill: #c4e3ca; }
.sand { fill: #fdeecb; }
.ur { fill: #e6e8ec; }
.road { fill: none; stroke: #e6b350; stroke-width: 1.900px; vector-effect: non-scaling-stroke; }
.minor { fill: none; stroke: #fff; stroke-width: 1.700px; vector-effect: non-scaling-stroke; }
.ferry { fill: none; stroke: #6f9cea; stroke-width: 2; stroke-dasharray: 14 6; }
.water-lines { fill: none; stroke: #91b4f2; stroke-width: 4; }
.hw-case, .hw-fill { fill: none; stroke-linejoin: round; stroke-linecap: round; }
.hw-case { stroke: #efb446; stroke-width: 12; }
.hw-fill { stroke: #fdebbb; stroke-width: 7; }
.border { fill: none; stroke: #5f6468; stroke-width: 4; }
.dash-line { stroke-width: 2.400; stroke-dasharray: 8 6; }
.lb { fill: #202124; paint-order: stroke; stroke: #f4fbf5; stroke-width: 5px; stroke-opacity: .85; stroke-linejoin: round; }
.big { font-size: 36px; font-weight: 500; }
.med { font-size: 26px; font-weight: 500; }
.reg { font-size: 24px; fill: #303337; }
.dot { fill: #fff; stroke: #202124; }
.sh { font-size: 18px; font-weight: 500; fill: #fff; text-anchor: middle; }
```
FILE: map.js
```js
const NS = 'http://www.w3.org/2000/svg';
const byId = id => document.getElementById(id);
function add(parent, tag, attrs, text) {
  const el = document.createElementNS(NS, tag);
  for (const k in attrs) el.setAttribute(k, attrs[k]);
  if (text !== undefined) el.textContent = text;
  parent.appendChild(el);
  return el;
}
let seed = 77;
const rnd = () => (seed = (seed * 16807) % 2147483647) / 2147483647;
const between = (a, b) => a + rnd() * (b - a);

// ground cover and secondary roads
const terrain = byId('terrain');
function blob(cx, cy, r, n) {
  let d = '';
  for (let i = 0; i < n; i++) {
    const a = i / n * Math.PI * 2, k = between(.45, 1.1) * r;
    d += (i ? 'L' : 'M') + (cx + Math.cos(a) * k).toFixed(1) + ' ' + (cy + Math.sin(a) * k * .75).toFixed(1);
  }
  return d + 'Z';
}
let forest = '', light = '', urban = '';
for (let i = 0; i < 190; i++) forest += blob(between(540, 2830), between(302, 1082), between(8, 36), 9);
for (let i = 0; i < 90; i++) light += blob(between(540, 2830), between(302, 1082), between(15, 45), 8);
for (let i = 0; i < 75; i++) forest += blob(between(2300, 2830), between(830, 1082), between(25, 62), 11);
for (let i = 0; i < 12; i++) forest += blob(between(1680, 1900), between(350, 440), between(20, 45), 10);
for (let i = 0; i < 260; i++) urban += blob(between(900, 2830), between(302, 1082), between(3, 11), 5);
const towns = [[1290,520,45],[1228,430,40],[1266,940,45],[1020,1040,26],[1527,430,34],[1370,600,22],[1398,740,24],[1516,745,28],[1650,820,34],[1722,790,20],[1593,655,20],[1800,500,30],[1785,600,28],[1836,370,24],[1624,395,22],[2172,365,34],[2135,330,20],[2439,515,24],[2769,480,34],[2591,325,24],[2124,830,50],[2215,800,55],[2300,770,60],[2380,780,60],[2170,750,45],[2128,940,42],[2218,1030,40],[2190,1070,45],[2004,965,28],[2170,880,40],[2260,900,40],[2320,870,40],[2500,860,30],[2508,690,22],[1909,860,18],[836,950,16],[2060,860,34],[1579,320,28]];
for (const [x, y, r] of towns) for (let i = 0; i < 7; i++) urban += blob(x + between(-r, r), y + between(-r, r) * .7, r * between(.25, .6), 8);
add(terrain, 'path', { class: 'light', d: light });
add(terrain, 'path', { class: 'forest', d: forest });
add(terrain, 'path', { class: 'ur', d: urban });
let minor = '';
for (let i = 0; i < 240; i++) {
  const x = between(560, 2080), y = between(302, 1082);
  if (x > 1850 && y > 620) continue;
  minor += 'M' + x.toFixed(0) + ' ' + y.toFixed(0);
  let a = between(0, 6.3);
  for (let k = 0; k < 5; k++) { a += between(-.6, .6); minor += 'l' + (Math.cos(a) * 17).toFixed(1) + ' ' + (Math.sin(a) * 17).toFixed(1); }
}
add(terrain, 'path', { class: 'minor', d: minor });
const step = 58, cols = 41, rows = 15, pts = [];
for (let r = 0; r < rows; r++) for (let c = 0; c < cols; c++) pts.push([510 + c * step + between(-22, 22), 290 + r * step + between(-22, 22)]);
let road = '';
const link = (p, q) => {
  const dx = q[0] - p[0], dy = q[1] - p[1], j = between(-.16, .16), k = between(-.16, .16);
  road += `M${p[0].toFixed(1)} ${p[1].toFixed(1)}L${(p[0] + dx * .33 - dy * j).toFixed(1)} ${(p[1] + dy * .33 + dx * j).toFixed(1)} ${(p[0] + dx * .68 - dy * k).toFixed(1)} ${(p[1] + dy * .68 + dx * k).toFixed(1)} ${q[0].toFixed(1)} ${q[1].toFixed(1)}`;
};
for (let r = 0; r < rows; r++) for (let c = 0; c < cols; c++) {
  const i = r * cols + c;
  if (c < cols - 1 && rnd() < .6) link(pts[i], pts[i + 1]);
  if (r < rows - 1 && rnd() < .62) link(pts[i], pts[i + cols]);
  if (c < cols - 1 && r < rows - 1 && rnd() < .13) link(pts[i], pts[i + cols + 1]);
}
add(terrain, 'path', { class: 'road', d: road });

// motorways: a dark casing below a pale core
for (const id of ['h5', 'h6', 'h7']) {
  const p = byId(id), core = p.cloneNode();
  core.removeAttribute('id');
  p.setAttribute('class', 'hw-case');
  core.setAttribute('class', 'hw-fill');
  p.parentNode.appendChild(core);
}

// road shields: text, x, y, kind
const shields = [['A44',1291,370],['A29',1273,616],['A4',1371,331],['A2',1471,339],['A1',1558,333],['A1',1724,381],['A28',1597,420],['A12',1444,448],['A27',1482,529],['A15',1464,580],['A16',1352,634],['A59',1414,684],['A58',1554,766],['A2',1610,731],['A50',1760,511],['A12',1877,524],['A73',1789,632],['A67',1785,841],['A67',1598,860],['A73',1883,907],['A12',1247,888,'w'],['E34',1140,943,'g'],['E40',887,1011,'g'],['E403',817,1076,'g'],['E19',1350,864,'g'],['E34',1408,928,'g'],['43',2310,579,'b'],['1',2439,606,'b'],['2',2580,622,'b'],['31',2198,629,'b'],['3',2072,653,'b'],['52',2228,692,'b'],['2',2264,738,'b'],['44',2531,763,'b'],['445',2549,796,'b'],['1',2332,877,'b'],['3',2185,956,'b'],['46',2236,946,'b'],['33',2726,481,'b'],['57',1977,725,'b'],['40',1967,848,'b'],['52',1967,952,'b'],['3',2836,701,'b']];
for (const [t, x, y, kind] of shields) {
  const g = byId('shields'), w = t.length === 4 ? 53 : t.length === 3 ? 44 : kind === 'b' ? 38 : 35;
  if (kind === 'b') add(g, 'path', { d: `M${x - w / 2} ${y - 8}L${x} ${y - 12} ${x + w / 2} ${y - 8}V${y + 8}L${x} ${y + 12} ${x - w / 2} ${y + 8}Z`, fill: '#4677c0' });
  else add(g, 'rect', { x: x - w / 2, y: y - 11, width: w, height: 22, fill: kind === 'g' ? '#789c4d' : kind === 'w' ? '#fff' : '#cf6562', stroke: kind === 'w' ? '#777' : 'none', 'stroke-width': 1.6 });
  const s = add(g, 'text', { x, y: y + 6.5, class: 'sh' }, t);
  if (kind === 'w') s.style.fill = '#333';
}

// place names: text, x, baseline, size, dot x, dot y, dot radius
const places = [['La Haye',1227,433,'big',1228,447,6.5],['Rotterdam',1291,520,'big',1292,534,6.5],['Renesse',1036,637,'reg',1035,647,3.5],['Middelbourg',977,773,'reg',977,784,5.5],['Goes',1078,771,'reg',1079,780,3.5],['Flessingue',963,837,'reg',962,810,3.5],['Knocke-Heist',859,867,'reg',859,876,3.5],['Blankenberge',725,901,'reg',803,892,3.5],['Ostende',721,933,'reg',721,944,5.5],['Bruges',836,941,'med',836,953,5.5],['La Panne',661,1028,'reg',605,1018,3.5],['nkerque',541,1042,'med',529,1054,5.5],['Gand',1020,1030,'big',1020,1045,6.5],['Berg-op-Zoom',1221,815,'reg',1223,786,5.5],['Rosendael',1287,751,'reg',1288,762,5.5],['Anvers',1266,931,'big',1266,946,6.5],['Malines',1291,1048,'reg',1292,1059,5.5],['Dordrecht',1370,587,'med',1370,599,5.5],['Almere',1579,311,'med'],['Utrecht',1527,423,'med',1527,435,5.5],['Amersfoort',1624,385,'med',1624,397,5.5],['Deventer',1903,320,'reg',1903,331,5.5],['Apeldoorn',1835,394,'med',1836,364,5.5],['Ede',1725,454,'reg',1725,465,5.5],['Arnhem',1810,486,'med'],['Nimègue',1788,589,'med',1787,600,5.5],['Clèves',1893,604,'reg',1894,615,5.5],['Bocholt',2070,573,'reg',2070,584,5.5],['Bois-le-Duc',1593,655,'med'],['Bréda',1398,729,'med',1398,741,5.5],['Tilbourg',1517,737,'med',1516,748,5.5],['Helmond',1722,784,'reg',1722,796,5.5],['Eindhoven',1650,816,'med',1650,828,5.5],['Turnhout',1460,876,'reg',1460,887,5.5],['Venlo',1872,868,'reg',1909,859,5.5],['Ruremonde',1843,952,'reg',1842,963,5.5],['Mönchengladbach',2003,991,'med',2004,961,5.5],['Hengelo',2135,325,'reg',2135,336,5.5],['Enschede',2172,388,'med',2172,358,5.5],['Ibbenbüren',2473,354,'reg',2472,325,5.5],['Rheine',2372,310,'reg',2372,322,5.5],['Osnabrück',2591,310,'med',2591,323,5.5],['Münster',2439,498,'big',2439,512,6.5],['Bielefeld',2768,456,'big',2769,471,6.5],['Gütersloh',2716,534,'med',2715,546,5.5],['Hamm',2508,669,'med',2508,681,5.5],['Lippstadt',2698,672,'reg',2699,683,5.5],['Paderborn',2851,643,'med'],['Dortmund',2380,760,'big',2380,775,6.5],['Essen',2214,795,'big',2215,809,6.5],['Duisbourg',2125,861,'big',2124,821,6.5],['Düsseldorf',2128,927,'big',2128,942,6.5],['Iserlohn',2464,843,'med',2464,855,5.5],['Brilon',2783,832,'reg',2784,843,5.5],['Willing',2792,890,'reg',2805,899,3.5],['Winterberg',2767,953,'reg',2767,962,3.5],['Lüdenscheid',2441,936,'reg',2440,947,5.5],['Leverkusen',2218,1035,'med',2218,1047,5.5],['Gummersbach',2416,1047,'reg',2416,1058,5.5],['Cologne',2196,1094,'big']];
for (const [t, x, y, size, dx, dy, r] of places) {
  const g = byId('labels');
  if (r) add(g, 'circle', { cx: dx, cy: dy, r, class: 'dot', 'stroke-width': r > 4 ? 2.6 : 1.8 });
  add(g, 'text', { x, y, class: 'lb ' + size, 'text-anchor': 'middle' }, t);
}

// asset clusters and pins: count, x, y
const markers = byId('markers');
for (const [n, x, y] of [[2,1807,497],[4,1781,579],[4,1491,691],[4,1847,724],[2,1871,799]]) {
  add(markers, 'circle', { cx: x, cy: y, r: 41, fill: '#1c3cf0', 'fill-opacity': .25 });
  add(markers, 'circle', { cx: x, cy: y, r: 33.5, fill: '#1c3cf0', 'fill-opacity': .4 });
  add(markers, 'circle', { cx: x, cy: y, r: 26, fill: '#1c3cf0', 'fill-opacity': .78 });
  add(markers, 'text', { x: x + 1, y: y + 9, 'font-size': 24, fill: '#fff', 'text-anchor': 'middle' }, n);
}
for (const [n, x, y] of [[5,1648,544],[6,1604,716],[16,1804,670],[10,1660,780],[2,1741.5,816]]) {
  add(markers, 'path', { d: `M${x} ${y}c-2-12-5-17-14-27a26 26 0 1 1 28 0c-9 10-12 15-14 27z`, fill: '#d94f3f', stroke: '#a53a30', 'stroke-width': 1.6 });
  add(markers, 'text', { x, y: y - 35.5, 'font-size': 27, fill: '#000', 'text-anchor': 'middle' }, n);
}
```
